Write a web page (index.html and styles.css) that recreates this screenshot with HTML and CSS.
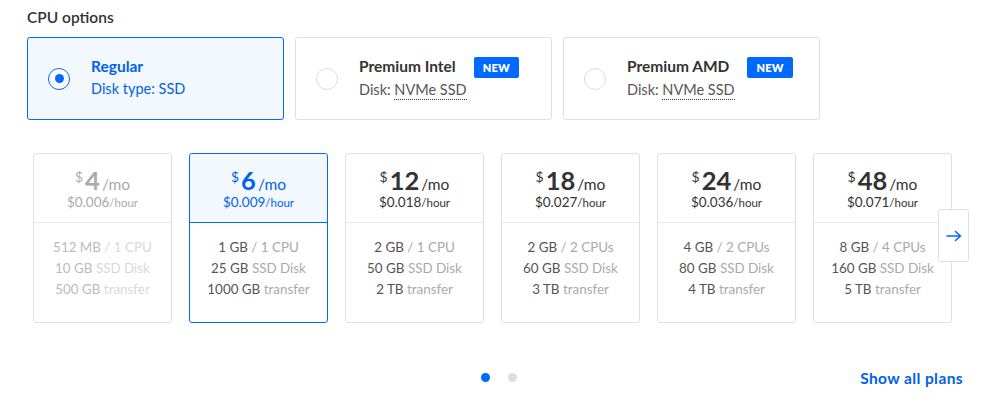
FILE: index.html
```html
<!DOCTYPE html>
<html>
<head>
<meta charset="utf-8">
<link rel="stylesheet" href="styles.css">
</head>
<body>
<div class="page">
  <h2 class="section-title">CPU options</h2>
  <div class="cpu-row">
    <div class="cpu-card selected">
      <span class="radio on"><span class="radio-dot"></span></span>
      <div class="cpu-text">
        <div class="cpu-title">Regular</div>
        <div class="cpu-sub">Disk type: SSD</div>
      </div>
    </div>
    <div class="cpu-card">
      <span class="radio"></span>
      <div class="cpu-text">
        <div class="cpu-title">Premium Intel <span class="badge">NEW</span></div>
        <div class="cpu-sub">Disk: <span class="dotted">NVMe SSD</span></div>
      </div>
    </div>
    <div class="cpu-card">
      <span class="radio"></span>
      <div class="cpu-text">
        <div class="cpu-title">Premium AMD <span class="badge">NEW</span></div>
        <div class="cpu-sub">Disk: <span class="dotted">NVMe SSD</span></div>
      </div>
    </div>
  </div>

  <div class="plans-wrap">
    <div class="plans">
      <div class="plan disabled">
        <div class="plan-head">
          <div class="price"><span class="cur">$</span><span class="amt">4</span><span class="per">/mo</span></div>
          <div class="hourly">$0.006<span class="hr">/hour</span></div>
        </div>
        <div class="plan-body">
          <div>512 MB <span class="u">/ 1 CPU</span></div>
          <div>10 GB <span class="u">SSD Disk</span></div>
          <div>500 GB <span class="u">transfer</span></div>
        </div>
      </div>
      <div class="plan active">
        <div class="plan-head">
          <div class="price"><span class="cur">$</span><span class="amt">6</span><span class="per">/mo</span></div>
          <div class="hourly">$0.009<span class="hr">/hour</span></div>
        </div>
        <div class="plan-body">
          <div>1 GB <span class="u">/ 1 CPU</span></div>
          <div>25 GB <span class="u">SSD Disk</span></div>
          <div>1000 GB <span class="u">transfer</span></div>
        </div>
      </div>
      <div class="plan">
        <div class="plan-head">
          <div class="price"><span class="cur">$</span><span class="amt">12</span><span class="per">/mo</span></div>
          <div class="hourly">$0.018<span class="hr">/hour</span></div>
        </div>
        <div class="plan-body">
          <div>2 GB <span class="u">/ 1 CPU</span></div>
          <div>50 GB <span class="u">SSD Disk</span></div>
          <div>2 TB <span class="u">transfer</span></div>
        </div>
      </div>
      <div class="plan">
        <div class="plan-head">
          <div class="price"><span class="cur">$</span><span class="amt">18</span><span class="per">/mo</span></div>
          <div class="hourly">$0.027<span class="hr">/hour</span></div>
        </div>
        <div class="plan-body">
          <div>2 GB <span class="u">/ 2 CPUs</span></div>
          <div>60 GB <span class="u">SSD Disk</span></div>
          <div>3 TB <span class="u">transfer</span></div>
        </div>
      </div>
      <div class="plan">
        <div class="plan-head">
          <div class="price"><span class="cur">$</span><span class="amt">24</span><span class="per">/mo</span></div>
          <div class="hourly">$0.036<span class="hr">/hour</span></div>
        </div>
        <div class="plan-body">
          <div>4 GB <span class="u">/ 2 CPUs</span></div>
          <div>80 GB <span class="u">SSD Disk</span></div>
          <div>4 TB <span class="u">transfer</span></div>
        </div>
      </div>
      <div class="plan">
        <div class="plan-head">
          <div class="price"><span class="cur">$</span><span class="amt">48</span><span class="per">/mo</span></div>
          <div class="hourly">$0.071<span class="hr">/hour</span></div>
        </div>
        <div class="plan-body">
          <div>8 GB <span class="u">/ 4 CPUs</span></div>
          <div>160 GB <span class="u">SSD Disk</span></div>
          <div>5 TB <span class="u">transfer</span></div>
        </div>
      </div>
    </div>
    <button class="next" aria-label="Next">
      <svg width="16" height="12" viewBox="0 0 16 12"><path d="M1 6H14.5M9.5 1.5L14.5 6L9.5 10.5" fill="none" stroke="#0069ff" stroke-width="1.6" stroke-linecap="round" stroke-linejoin="round"/></svg>
    </button>
  </div>

  <div class="footer">
    <div class="dots"><span class="dot on"></span><span class="dot"></span></div>
    <a class="show-all" href="#">Show all plans</a>
  </div>
</div>
</body>
</html>
```

FILE: styles.css
```css
* { box-sizing: border-box; }
html, body { margin: 0; padding: 0; background: #fff; }
body { font-family: Lato, "Open Sans", "Liberation Sans", sans-serif; color: #333; }
.page { width: 992px; height: 419px; padding: 7px 0 0 27px; position: relative; }
.section-title { margin: 0; font-size: 15.5px; line-height: 20px; font-weight: 600; color: #333; }
.cpu-row { display: flex; gap: 11px; margin-top: 10px; }
.cpu-card {
  width: 257px; height: 83px; border: 1px solid #e0e0e0; border-radius: 3px;
  display: flex; align-items: center; padding-left: 20px; background: #fff;
}
.cpu-card.selected { background: #f3f8ff; border-color: #0069ff; }
.radio {
  width: 22px; height: 22px; border-radius: 50%; border: 1px solid #dcdcdc;
  display: flex; align-items: center; justify-content: center; flex: none; background: #fff;
}
.radio.on { border: 1.5px solid #0069ff; }
.radio-dot { width: 9px; height: 9px; border-radius: 50%; background: #0069ff; }
.cpu-text { margin-left: 21px; margin-top: -2px; }
.cpu-title { font-size: 15.5px; font-weight: 700; line-height: 22px; color: #333; display: flex; align-items: center; }
.cpu-card.selected .cpu-title { color: #0061eb; }
.cpu-sub { font-size: 14.5px; line-height: 22px; color: #555; margin-top: 1px; }
.cpu-card.selected .cpu-sub { color: #0061eb; }
.dotted { border-bottom: 1px dotted #333; padding-bottom: 1px; }
.badge {
  display: inline-block; margin-left: 18px; background: #0069ff; color: #fff;
  font-size: 11px; font-weight: 800; line-height: 21px; height: 21px; padding: 0 9px;
  border-radius: 2px; letter-spacing: 0.3px; margin-top: 2px;
}
.plans-wrap { position: relative; margin-top: 33px; margin-left: 6px; width: 936px; }
.plans { display: flex; gap: 17px; }
.plan {
  width: 139px; height: 170px; border: 1px solid #e0e0e0; border-radius: 3px;
  text-align: center; background: #fff; flex: none;
}
.plan-head { height: 69px; border-bottom: 1px solid #e6e6e6; padding-top: 12px; border-radius: 3px 3px 0 0; }
.price { line-height: 28px; height: 28px; color: #333; white-space: nowrap; }
.cur { font-size: 14px; vertical-align: top; position: relative; top: -3px; margin-right: 2px; }
.amt { font-size: 25.5px; font-weight: 700; }
.per { font-size: 15.5px; margin-left: 2px; }
.hourly { font-size: 13.5px; line-height: 16px; color: #333; }
.hr { font-size: 11.5px; }
.plan-body { padding-top: 14px; font-size: 13.4px; line-height: 21px; color: #555; }
.plan-body .u { color: #aaa; }
.plan.active { border-color: #0069ff; }
.plan.active .plan-head { background: #f3f8ff; border-bottom-color: #0069ff; }
.plan.active .price, .plan.active .hourly { color: #0061eb; }
.plan.disabled .price, .plan.disabled .hourly { color: #aaa; }
.plan.disabled .plan-body { color: #bbb; }
.plan.disabled .plan-body .u { color: #d8d8d8; }
.next {
  position: absolute; left: 905px; top: 56px; width: 31px; height: 53px;
  background: #fff; border: 1px solid #e0e0e0; border-radius: 3px; padding: 0;
  display: flex; align-items: center; justify-content: center; cursor: pointer;
}
.footer { position: relative; margin-top: 45px; height: 20px; width: 937px; }
.dots { position: absolute; left: 454px; top: 5px; display: flex; gap: 18px; }
.dot { width: 9px; height: 9px; border-radius: 50%; background: #ddd; }
.dot.on { background: #0069ff; }
.show-all {
  position: absolute; right: 1px; top: 0; font-size: 15.5px; font-weight: 700;
  color: #0061eb; text-decoration: none; line-height: 20px; letter-spacing: 0.4px;
}
```
